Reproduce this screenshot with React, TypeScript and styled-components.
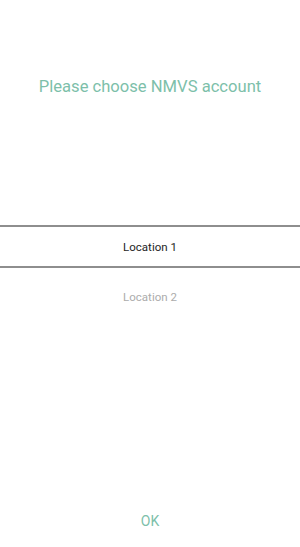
import styled, { createGlobalStyle } from 'styled-components';
import { useState } from 'react';

const GlobalStyle = createGlobalStyle`
  html, body {
    margin: 0;
    padding: 0;
    background: #ffffff;
  }
  body {
    font-family: Roboto, 'Liberation Sans', sans-serif;
  }
`;

const Page = styled.div`
  display: flex;
  flex-direction: column;
  height: 547px;
  background: #ffffff;
`;

const Title = styled.h1`
  margin: 0;
  padding-top: 77px;
  font-size: 16.6px;
  font-weight: 400;
  line-height: 20px;
  text-align: center;
  color: #7dbfaa;
`;

const Picker = styled.div`
  display: flex;
  flex-direction: column;
  margin-top: 128px;
`;

const Row = styled.div<{ $selected: boolean }>`
  display: flex;
  align-items: center;
  justify-content: center;
  font-size: 11.5px;
  cursor: pointer;
  color: ${(p) => (p.$selected ? '#1e1e1e' : '#acacac')};
  height: ${(p) => (p.$selected ? '39px' : '16px')};
  margin-top: ${(p) => (p.$selected ? '0' : '21px')};
  border-top: ${(p) => (p.$selected ? '2px solid #8e8e8e' : 'none')};
  border-bottom: ${(p) => (p.$selected ? '2px solid #8e8e8e' : 'none')};
`;

const Footer = styled.div`
  margin-top: auto;
  display: flex;
  justify-content: center;
  padding-bottom: 16px;
`;

const OkButton = styled.button`
  border: none;
  background: none;
  padding: 0;
  font-family: Roboto, 'Liberation Sans', sans-serif;
  font-size: 14px;
  line-height: 20px;
  color: #7dbfaa;
  cursor: pointer;
`;

const locations = ['Location 1', 'Location 2'];

export default function App() {
  const [selected, setSelected] = useState(0);

  return (
    <Page>
      <GlobalStyle />
      <Title>Please choose NMVS account</Title>
      <Picker>
        {locations.map((name, i) => (
          <Row key={name} $selected={i === selected} onClick={() => setSelected(i)}>
            {name}
          </Row>
        ))}
      </Picker>
      <Footer>
        <OkButton type="button">OK</OkButton>
      </Footer>
    </Page>
  );
}
